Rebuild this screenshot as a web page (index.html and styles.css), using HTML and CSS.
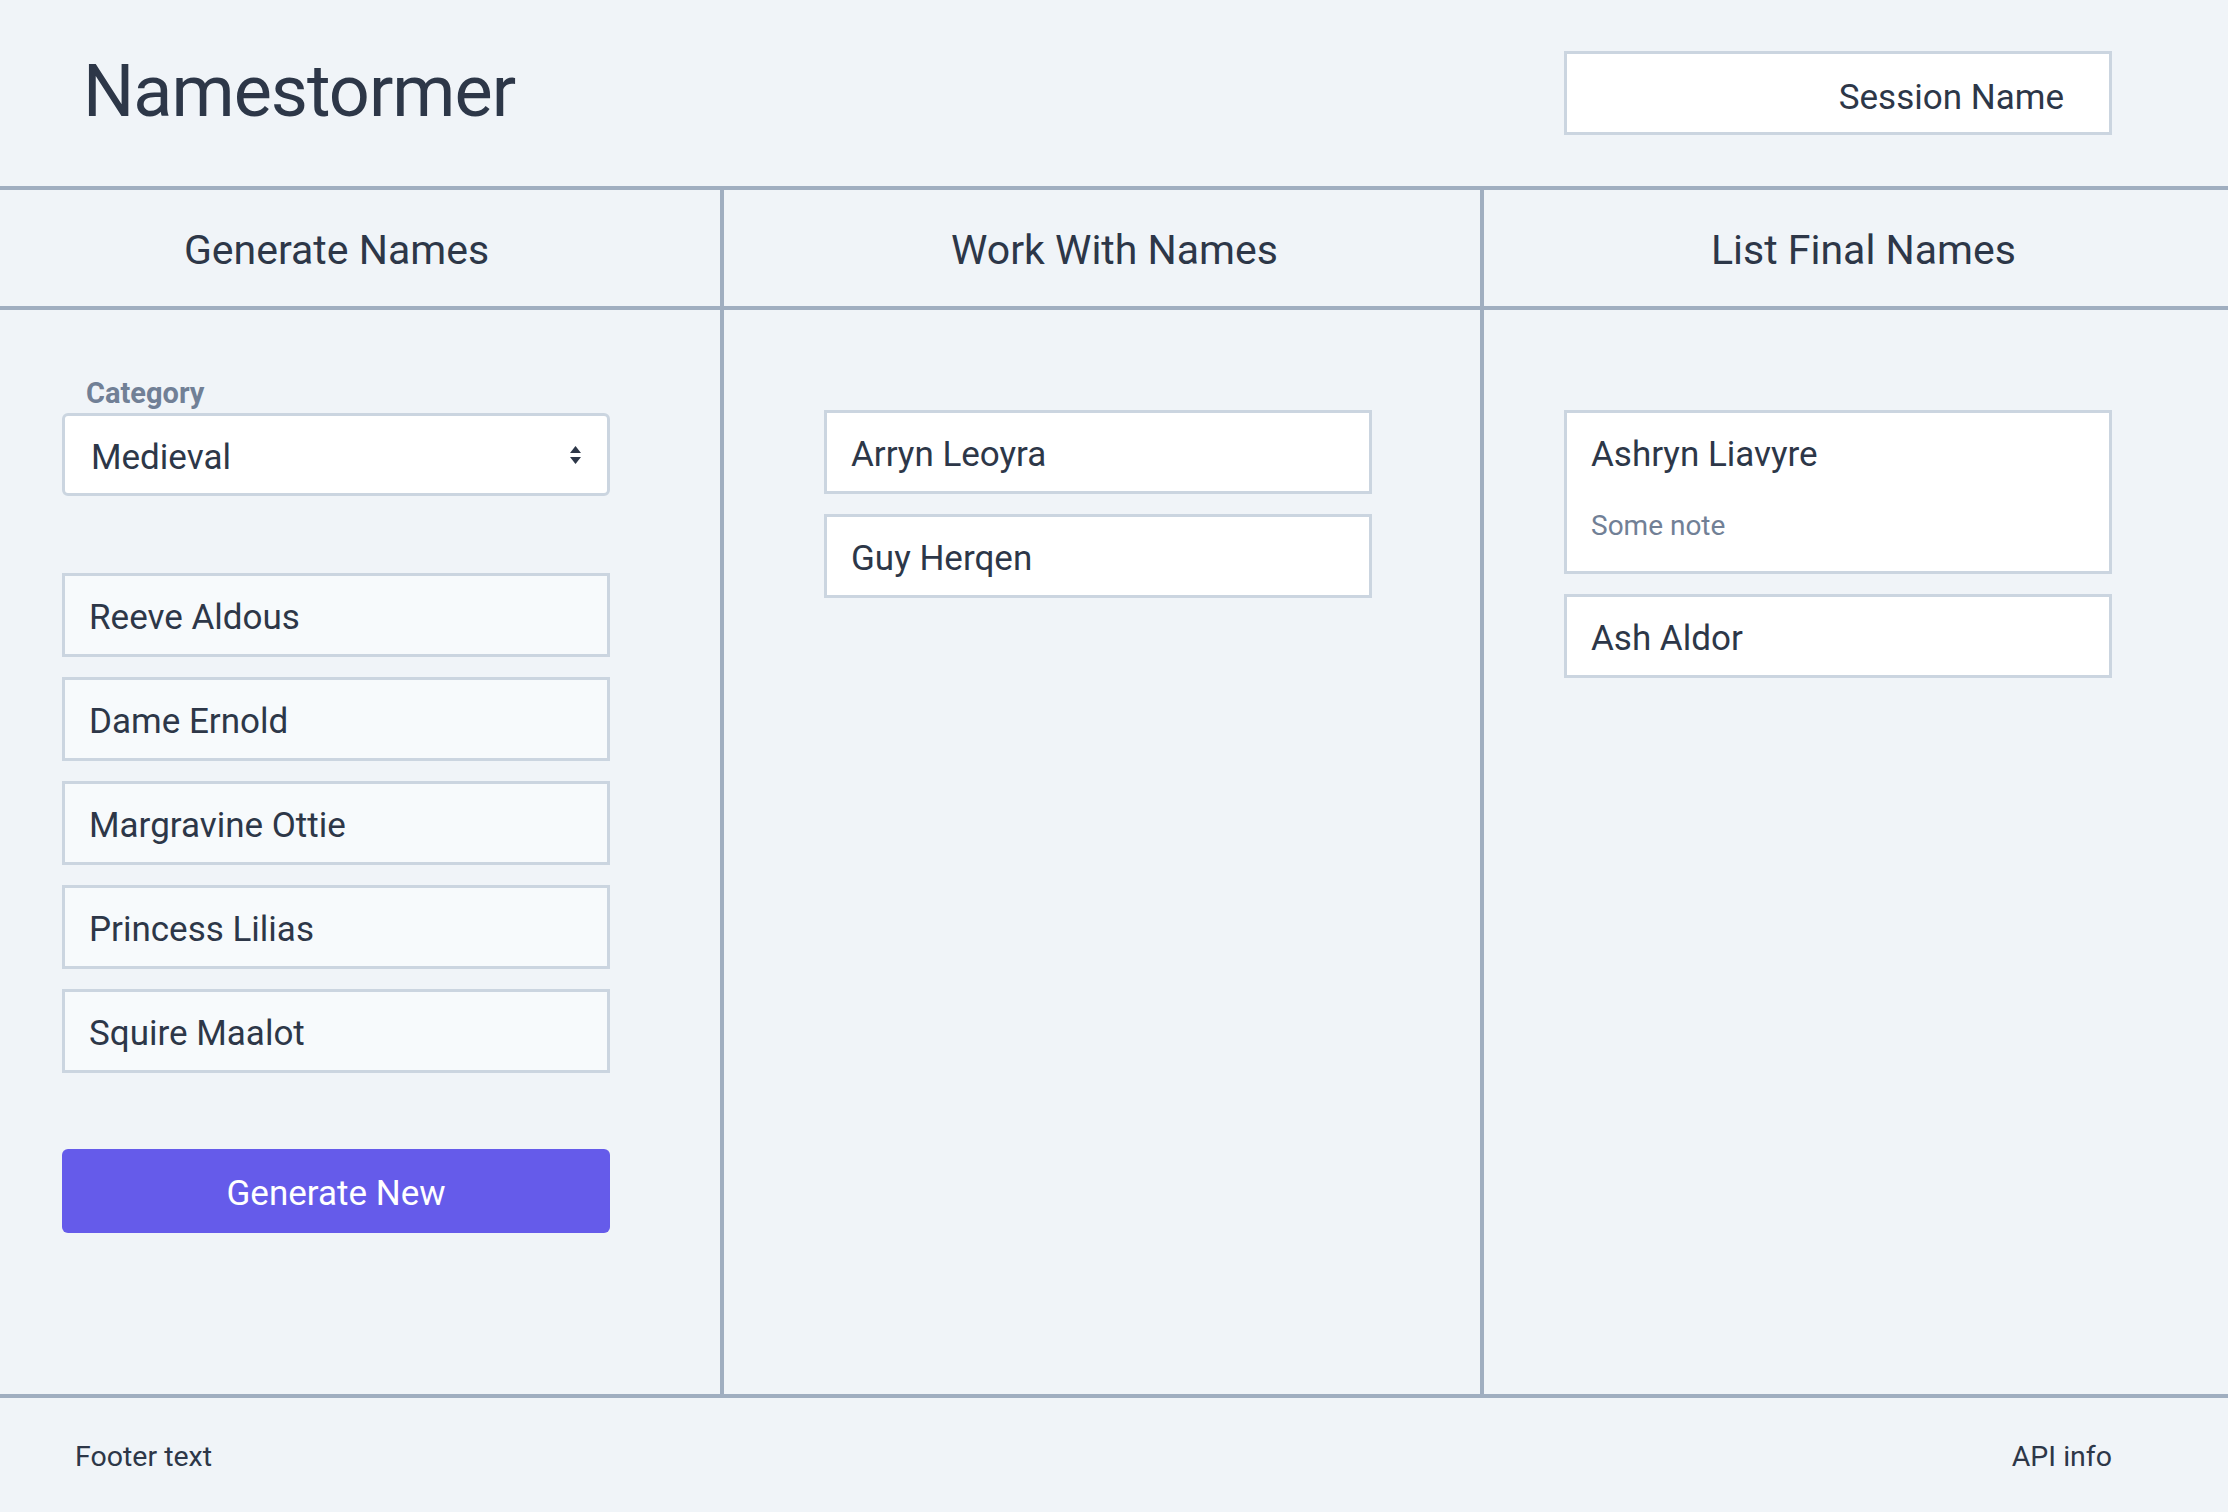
FILE: index.html
```html
<!DOCTYPE html>
<html lang="en">
<head>
<meta charset="utf-8">
<title>Namestormer</title>
<link rel="stylesheet" href="styles.css">
</head>
<body>
<header class="header">
  <h1 class="title">Namestormer</h1>
  <div class="session">Session Name</div>
</header>
<nav class="tabs">
  <div class="tab tab-generate">Generate Names</div>
  <div class="tab tab-work">Work With Names</div>
  <div class="tab tab-final">List Final Names</div>
</nav>
<main class="columns">
  <section class="col col-generate">
    <div class="label">Category</div>
    <div class="select">
      <span>Medieval</span>
      <svg class="select-arrow" width="11" height="20" viewBox="0 0 11 20"><polygon points="0,8 5.5,1 11,8" fill="#2d3748"/><polygon points="0,12 11,12 5.5,19" fill="#2d3748"/></svg>
    </div>
    <ul class="list list-generated">
      <li class="item item-light">Reeve Aldous</li>
      <li class="item item-light">Dame Ernold</li>
      <li class="item item-light">Margravine Ottie</li>
      <li class="item item-light">Princess Lilias</li>
      <li class="item item-light">Squire Maalot</li>
    </ul>
    <button class="btn">Generate New</button>
  </section>
  <section class="col col-work">
    <ul class="list">
      <li class="item">Arryn Leoyra</li>
      <li class="item">Guy Herqen</li>
    </ul>
  </section>
  <section class="col col-final">
    <ul class="list">
      <li class="item item-note"><div class="item-name">Ashryn Liavyre</div><div class="note">Some note</div></li>
      <li class="item">Ash Aldor</li>
    </ul>
  </section>
</main>
<footer class="footer">
  <span>Footer text</span>
  <span>API info</span>
</footer>
</body>
</html>
```
FILE: styles.css
```css
html, body {
  margin: 0;
  padding: 0;
}
body {
  background: #f0f4f8;
  color: #2d3748;
  font-family: Roboto, "Liberation Sans", sans-serif;
  width: 2228px;
  height: 1512px;
  overflow: hidden;
}
.header {
  height: 186px;
  border-bottom: 4px solid #a0aec0;
  display: flex;
  align-items: center;
  justify-content: space-between;
  padding: 0 116px 0 83px;
}
.title {
  margin: -2px 0 0 0;
  font-size: 72px;
  font-weight: 400;
  line-height: 72px;
  letter-spacing: -1px;
}
.session {
  width: 548px;
  height: 84px;
  box-sizing: border-box;
  border: 3px solid #cbd5e0;
  background: #fff;
  font-size: 35px;
  display: flex;
  align-items: center;
  justify-content: flex-end;
  padding: 8px 45px 0 0;
}
.tabs {
  display: grid;
  grid-template-columns: 724px 760px 1fr;
  height: 116px;
  border-bottom: 4px solid #a0aec0;
}
.tab {
  display: flex;
  align-items: center;
  justify-content: center;
  font-size: 41px;
  padding-top: 3px;
  box-sizing: border-box;
}
.tab-generate {
  border-right: 4px solid #a0aec0;
  padding-right: 47px;
}
.tab-work {
  border-right: 4px solid #a0aec0;
  padding-left: 25px;
}
.tab-final {
  padding-left: 15px;
}
.columns {
  display: grid;
  grid-template-columns: 724px 760px 1fr;
  height: 1084px;
  border-bottom: 4px solid #a0aec0;
}
.col {
  box-sizing: border-box;
}
.col-generate {
  border-right: 4px solid #a0aec0;
  padding: 61px 0 0 62px;
}
.col-work {
  border-right: 4px solid #a0aec0;
  padding: 100px 0 0 100px;
}
.col-final {
  padding: 100px 0 0 80px;
}
.label {
  font-size: 29px;
  font-weight: 700;
  line-height: 42px;
  color: #718096;
  padding: 1px 0 0 24px;
  height: 42px;
  box-sizing: border-box;
}
.select {
  width: 548px;
  height: 83px;
  box-sizing: border-box;
  border: 3px solid #cbd5e0;
  border-radius: 6px;
  background: #fff;
  font-size: 35px;
  display: flex;
  align-items: center;
  justify-content: space-between;
  padding: 0 26px 0 26px;
}
.select span {
  padding-top: 6px;
}
.select-arrow {
  display: block;
}
.list {
  list-style: none;
  margin: 0;
  padding: 0;
  display: flex;
  flex-direction: column;
  gap: 20px;
}
.list-generated {
  margin-top: 77px;
}
.item {
  width: 548px;
  min-height: 84px;
  box-sizing: border-box;
  border: 3px solid #cbd5e0;
  background: #fff;
  font-size: 35px;
  line-height: 72px;
  padding: 6px 24px 0 24px;
}
.item-light {
  background: #f7fafc;
}
.item-note {
  padding-bottom: 24px;
}
.item-name {
  line-height: 72px;
}
.note {
  font-size: 28px;
  line-height: 42px;
  margin-top: 14px;
  color: #718096;
}
.btn {
  display: block;
  margin-top: 76px;
  width: 548px;
  height: 84px;
  border: none;
  border-radius: 6px;
  background: #655bea;
  color: #fff;
  font-family: Roboto, "Liberation Sans", sans-serif;
  font-size: 35px;
  padding: 4px 0 0 0;
}
.footer {
  height: 114px;
  display: flex;
  align-items: center;
  justify-content: space-between;
  padding: 2px 116px 0 75px;
  box-sizing: border-box;
  font-size: 28.5px;
}
```
